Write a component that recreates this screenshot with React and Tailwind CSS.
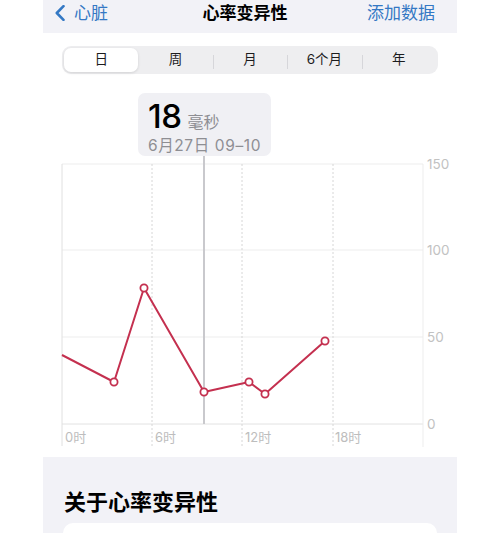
import React from 'react';

const FONT = "font-['Inter','Noto_Sans_CJK_SC',sans-serif]";

const SEGMENTS = ['日', '周', '月', '6个月', '年'];

// page coordinates (svg viewBox is offset to match the page)
const POINTS = [
  [114, 382],
  [144, 288],
  [204, 392],
  [249, 382],
  [265, 394],
  [325, 341],
];

const Y_LABELS = [
  { v: '150', y: 164 },
  { v: '100', y: 250 },
  { v: '50', y: 337 },
  { v: '0', y: 424 },
];

const X_LABELS = [
  { t: '0时', x: 65 },
  { t: '6时', x: 155 },
  { t: '12时', x: 245 },
  { t: '18时', x: 335 },
];

function Chart() {
  const path = 'M62 355 ' + POINTS.map(([x, y]) => `L${x} ${y}`).join(' ');
  return (
    <svg className="absolute inset-0" width="414" height="383" viewBox="43 74 414 383">
      {/* horizontal grid */}
      {[164, 250, 337].map((y) => (
        <line key={y} x1="62" x2="423" y1={y} y2={y} stroke="#ededed" strokeWidth="1" />
      ))}
      <line x1="62" x2="423" y1="424" y2="424" stroke="#e2e2e2" strokeWidth="1" />

      {/* vertical grid */}
      <line x1="62" x2="62" y1="164" y2="446" stroke="#e0e0e0" strokeWidth="1" />
      <line x1="423" x2="423" y1="164" y2="447" stroke="#ededed" strokeWidth="1" />
      {[152, 242, 333].map((x) => (
        <line key={x} x1={x} x2={x} y1="164" y2="446" stroke="#d6d6d6" strokeWidth="1" strokeDasharray="2 2" />
      ))}

      {/* selection */}
      <line x1="204" x2="204" y1="156" y2="424" stroke="#c9c9cd" strokeWidth="2" />

      {/* labels */}
      {Y_LABELS.map((l) => (
        <text key={l.v} x="427" y={l.y + 5} fontSize="13.5" fill="#c2c2c2" fontFamily="Inter, sans-serif">
          {l.v}
        </text>
      ))}
      {X_LABELS.map((l) => (
        <text key={l.t} x={l.x} y="442" fontSize="13" fill="#bdbdbd" fontFamily="Inter, 'Noto Sans CJK SC', sans-serif">
          {l.t}
        </text>
      ))}

      {/* data */}
      <path d={path} fill="none" stroke="#c4304f" strokeWidth="2" strokeLinejoin="round" />
      {POINTS.map(([x, y], i) => (
        <circle key={i} cx={x} cy={y} r="3.6" fill="#fff" stroke="#c4304f" strokeWidth="1.8" />
      ))}
    </svg>
  );
}

export default function App() {
  return (
    <div className={`w-[500px] h-[533px] bg-white overflow-hidden ${FONT}`}>
      <div className="ml-[43px] w-[414px] h-full flex flex-col">
        {/* Nav bar */}
        <div className="h-[33px] shrink-0 bg-[#f2f2f7] pb-[7px] pl-[12px] pr-[22px] grid grid-cols-[1fr_auto_1fr] items-center">
          <div className="flex items-center gap-[9px] text-[#3478c4]">
            <svg width="10" height="16" viewBox="0 0 10 16">
              <path d="M8.5 1.2 L1.8 8 L8.5 14.8" fill="none" stroke="#3478c4" strokeWidth="2.6" strokeLinecap="round" strokeLinejoin="round" />
            </svg>
            <span className="text-[17px] leading-none">心脏</span>
          </div>
          <div className="text-[17px] font-bold text-black leading-none">心率变异性</div>
          <div className="text-[17px] text-[#3478c4] leading-none text-right">添加数据</div>
        </div>

        {/* Segmented control */}
        <div className="mt-[13px] mx-[19px] h-[28px] bg-[#eeeef0] rounded-[9px] p-[2px] flex shrink-0">
          {SEGMENTS.map((s, i) => (
            <div key={s} className="flex-1 relative flex items-center justify-center">
              {i === 0 && (
                <div className="absolute inset-0 bg-white rounded-[7px] shadow-[0_1px_3px_rgba(0,0,0,0.12)]" />
              )}
              {i > 1 && <div className="absolute left-0 top-[7px] w-px h-[14px] bg-[#d6d6da]" />}
              <span className="relative text-[13.5px] text-[#1c1c1e] leading-none">{s}</span>
            </div>
          ))}
        </div>

        {/* Chart */}
        <div className="relative h-[383px] shrink-0">
          <Chart />
          <div className="absolute left-[95px] top-[19px] w-[133px] h-[63px] bg-[#f0f0f4] rounded-[7px] px-[10px] pt-[4px]">
            <div className="flex items-baseline gap-[6px]">
              <span className="text-[33px] leading-[38px] font-medium text-black tracking-[-0.5px]">18</span>
              <span className="text-[16px] text-[#8e8e93]">毫秒</span>
            </div>
            <div className="text-[15.5px] leading-[18px] text-[#8e8e93] tracking-[0.6px] mt-[2px] whitespace-nowrap">6月27日 09–10</div>
          </div>
        </div>

        {/* About section */}
        <div className="flex-1 bg-[#f2f2f7] pt-[31px] px-[20px]">
          <div className="pl-[1px] text-[22px] leading-[28px] font-bold text-black">关于心率变异性</div>
          <div className="mt-[7px] h-[40px] bg-white rounded-[10px]" />
        </div>
      </div>
    </div>
  );
}
